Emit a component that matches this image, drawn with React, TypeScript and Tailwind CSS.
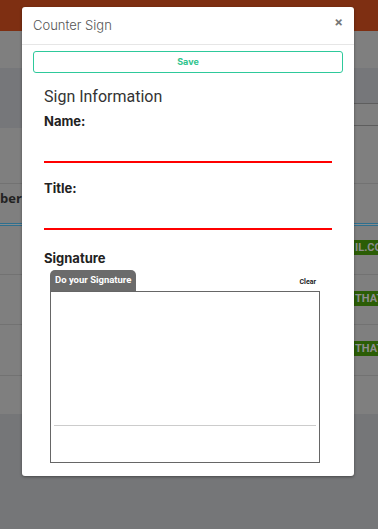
import React from 'react'

function Badge({ text }: { text: string }) {
  return (
    <div className="h-[15px] w-full bg-[#2b5d05] pl-[1px] text-[11px] font-bold leading-[15px] text-[#8d8d8d] font-['Roboto',sans-serif] overflow-hidden whitespace-nowrap">
      {text}
    </div>
  )
}

function Backdrop() {
  return (
    <div className="flex h-[529px] w-full flex-col bg-[#767779]">
      <div className="h-[31px] bg-[#7e2f12]" />
      <div className="h-[37px] bg-[#7f7f7f]" />
      <div className="flex h-[60px]">
        <div className="flex-1 bg-[#76777a]" />
        <div className="flex w-[24px] flex-col">
          <div className="h-[35px] bg-[#76777a]" />
          <div className="h-[1px] bg-[#5e5e5e]" />
          <div className="h-[21px] bg-[#7f7f7f]" />
          <div className="h-[1px] bg-[#5e5e5e]" />
          <div className="flex-1 bg-[#7f7f7f]" />
        </div>
      </div>
      <div className="h-[55px] bg-[#7f7f7f]" />
      <div className="h-[1px] bg-[#727272]" />
      <div className="h-[39px] bg-[#7f7f7f] pt-[5px] text-[13px] font-bold text-[#222] font-['Open_Sans',sans-serif]">
        ber
      </div>
      <div className="h-[1px] bg-[#2e6f8e]" />
      <div className="h-[1px] bg-[#8a8a8a]" />
      <div className="h-[1px] bg-[#2e6f8e]" />
      <div className="flex h-[48px] justify-end bg-[#7f7f7f] pt-[14px]">
        <div className="w-[24px]">
          <Badge text="IL.CO" />
        </div>
      </div>
      <div className="h-[1px] bg-[#727272]" />
      <div className="flex h-[49px] justify-end bg-[#7f7f7f] pt-[16px]">
        <div className="w-[24px]">
          <Badge text="THAT" />
        </div>
      </div>
      <div className="h-[1px] bg-[#727272]" />
      <div className="flex h-[50px] justify-end bg-[#7f7f7f] pt-[16px]">
        <div className="w-[24px]">
          <Badge text="THAT" />
        </div>
      </div>
      <div className="h-[1px] bg-[#727272]" />
      <div className="h-[38px] bg-[#7f7f7f]" />
      <div className="flex-1 bg-[#757678]" />
    </div>
  )
}

export default function App() {
  return (
    <div className="relative h-[529px] w-[378px] overflow-hidden font-['Inter',sans-serif]">
      <Backdrop />

      <div className="absolute left-[22px] top-[7px] flex h-[469px] w-[332px] flex-col rounded-[3px] bg-white shadow-[0_1px_3px_rgba(0,0,0,0.4)]">
        <div className="flex h-[38px] items-center justify-between border-b border-[#e6e6e6] pl-[11px] pr-[11px]">
          <span className="text-[13px] font-light text-[#555]">Counter Sign</span>
          <span className="-mt-[6px] text-[13px] font-bold text-[#777]">×</span>
        </div>

        <div className="px-[11px] pt-[6px]">
          <button className="flex h-[22px] w-full items-center justify-center rounded-[3px] border border-[#2ec99b] text-[9px] font-bold text-[#30c48d]">
            Save
          </button>
        </div>

        <div className="px-[22px]">
          <h2 className="mt-[14px] text-[16px] leading-[20px] text-[#333] font-['Roboto',sans-serif]">
            Sign Information
          </h2>
          <div className="mt-[6px] text-[13px] font-bold leading-[16px] text-[#222]">Name:</div>
          <div className="mt-[32px] h-[2px] w-[288px] bg-[#ff0000]" />
          <div className="mt-[17px] text-[13px] font-bold leading-[16px] text-[#222]">Title:</div>
          <div className="mt-[32px] h-[2px] w-[288px] bg-[#ff0000]" />
          <div className="mt-[20px] text-[13px] font-bold leading-[16px] text-[#222]">Signature</div>

          <div className="ml-[6px] mt-[4px] w-[270px]">
            <div className="flex items-end justify-between">
              <div className="flex h-[21px] items-center rounded-t-[5px] bg-[#6b6b6b] px-[5px] text-[9.5px] font-bold text-white font-['Roboto',sans-serif]">
                Do your Signature
              </div>
              <span className="mb-[4px] mr-[4px] text-[7px] font-bold text-[#222] font-['Roboto',sans-serif]">
                Clear
              </span>
            </div>
            <div className="flex h-[172px] flex-col border border-[#666] px-[3px]">
              <div className="mt-[133px] h-[1px] bg-[#cccccc]" />
            </div>
          </div>
        </div>
      </div>
    </div>
  )
}
